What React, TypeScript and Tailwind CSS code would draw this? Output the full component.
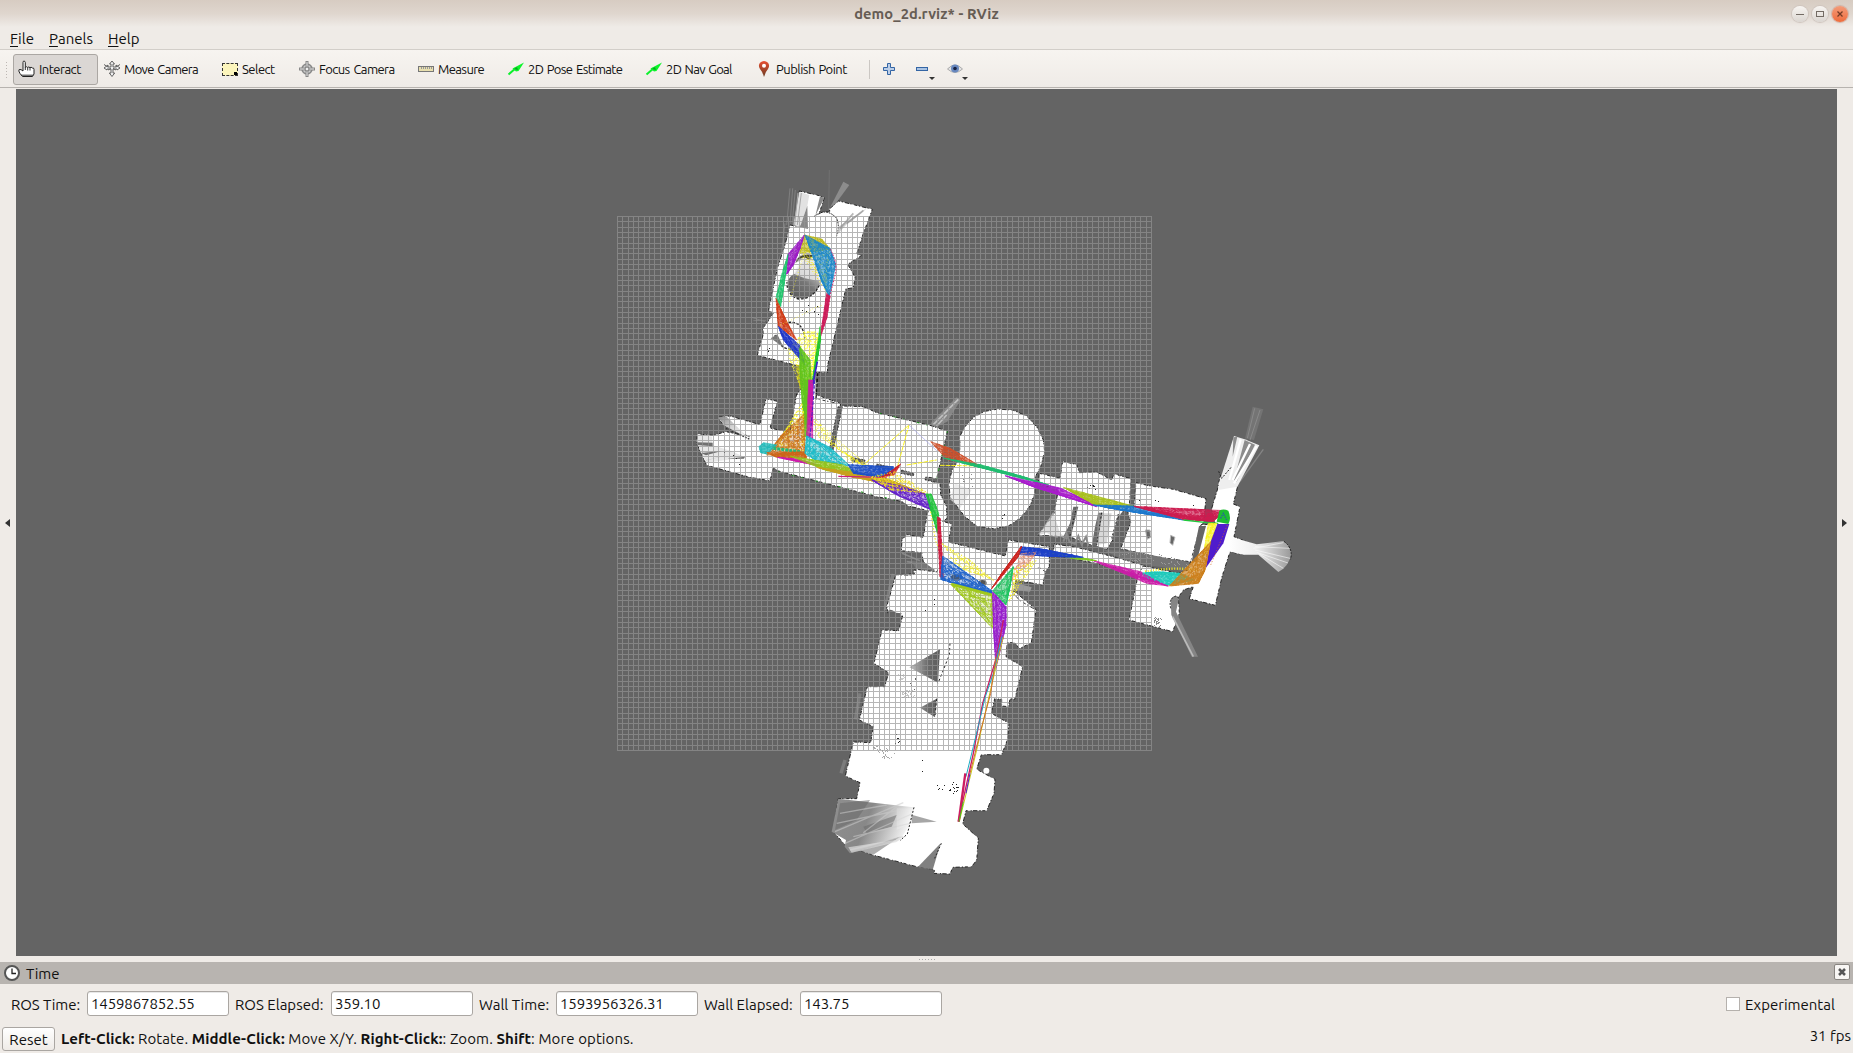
import React from "react";

type Pt = [number, number];

function parse(s: string): Pt[] {
  return s.trim().split(/\s+/).map((p) => p.split(",").map(Number) as Pt);
}

function rng(seed: number) {
  let s = seed * 7919 + 17;
  return () => {
    s = (s * 16807) % 2147483647;
    return s / 2147483647;
  };
}

// Free space: white area with a broken black wall line round it.
function Room({ p }: { p: string }) {
  return (
    <g>
      <polygon points={p} fill="#fff" />
      <polygon points={p} fill="none" stroke="#111" strokeWidth="2.6" strokeDasharray="9 5 4 6 13 4 3 9" />
    </g>
  );
}

// A bundle of constraint lines: random chords across a polygon.
function Fan({ p, c, n = 60, base = 0.5, dots = false }: { p: string; c: string; n?: number; base?: number; dots?: boolean }) {
  const pts = parse(p);
  const r = rng(pts[0][0] + pts[0][1] * 3 + n);
  const edge = () => {
    const i = Math.floor(r() * pts.length);
    const t = r();
    const a = pts[i];
    const b = pts[(i + 1) % pts.length];
    return [i, a[0] + (b[0] - a[0]) * t, a[1] + (b[1] - a[1]) * t];
  };
  let d = "";
  const count = dots ? n : n * 0.6;
  for (let k = 0; k < count; k++) {
    const a = edge();
    const b = edge();
    if (a[0] === b[0]) continue;
    d += `M${a[1].toFixed(1)} ${a[2].toFixed(1)}L${b[1].toFixed(1)} ${b[2].toFixed(1)}`;
  }
  return (
    <g>
      <polygon points={p} fill={c} fillOpacity={base} />
      <path d={d} stroke={c} strokeOpacity=".95" strokeWidth={dots ? "3" : "2.8"} strokeDasharray={dots ? "3 8 5 13 3 6" : "7 5 3 8 11 6"} fill="none" />
      {!dots && <polygon points={p} fill="none" stroke={c} strokeWidth="2.4" strokeOpacity=".8" />}
    </g>
  );
}

function Specks({ p, c = "#222", n }: { p: string; c?: string; n: number }) {
  const pts = parse(p);
  const xs = pts.map((q) => q[0]);
  const ys = pts.map((q) => q[1]);
  const x0 = Math.min(...xs), x1 = Math.max(...xs), y0 = Math.min(...ys), y1 = Math.max(...ys);
  const r = rng(x0 + y0 + n);
  const inside = (x: number, y: number) => {
    let v = false;
    for (let i = 0, j = pts.length - 1; i < pts.length; j = i++) {
      const [xi, yi] = pts[i];
      const [xj, yj] = pts[j];
      if (yi > y !== yj > y && x < ((xj - xi) * (y - yi)) / (yj - yi) + xi) v = !v;
    }
    return v;
  };
  let d = "";
  for (let k = 0; k < n; k++) {
    const x = Math.round((x0 + r() * (x1 - x0)) / 3) * 3;
    const y = Math.round((y0 + r() * (y1 - y0)) / 3) * 3;
    if (inside(x, y)) d += `M${x} ${y}h3v3h-3z`;
  }
  return <path d={d} fill={c} shapeRendering="crispEdges" />;
}

function Grid() {
  let d = "";
  for (let i = 0; i <= 100; i++) {
    const o = Math.round(i * 5.34);
    d += `M${617 + o} 216h1v535h-1zM617 ${216 + o}h535v1h-535z`;
  }
  return <path d={d} fill="#949494" fillOpacity=".68" />;
}

function MapView() {
  return (
    <svg className="block h-full w-full" viewBox="16 89 1821 867" preserveAspectRatio="none">
      <defs>
        <linearGradient id="ray" x1="0" y1="0" x2="1" y2="1">
          <stop offset="0" stopColor="#858585" />
          <stop offset=".45" stopColor="#d5d5d5" />
          <stop offset="1" stopColor="#fff" />
        </linearGradient>
        <linearGradient id="shade" x1="0" y1="1" x2=".6" y2="0">
          <stop offset="0" stopColor="#555" />
          <stop offset=".5" stopColor="#777" />
          <stop offset="1" stopColor="#eee" />
        </linearGradient>
        <linearGradient id="tri" x1="0" y1="0" x2="1" y2="0">
          <stop offset="0" stopColor="#c4c4c4" />
          <stop offset=".6" stopColor="#6b6b6b" />
          <stop offset="1" stopColor="#5c5c5c" />
        </linearGradient>
        <linearGradient id="fan" x1="0" y1="0" x2="1" y2=".25">
          <stop offset="0" stopColor="#8f8f8f" />
          <stop offset=".5" stopColor="#888" />
          <stop offset="1" stopColor="#f4f4f4" />
        </linearGradient>
        <linearGradient id="right" x1="0" y1="0" x2="1" y2="0">
          <stop offset="0" stopColor="#fff" />
          <stop offset=".45" stopColor="#eee" />
          <stop offset="1" stopColor="#999" />
        </linearGradient>
      </defs>

      {/* North wing */}
      <g transform="translate(690 165) scale(.333333)">
        <path d="M418 15L416 135" stroke="#777" strokeWidth="2" />
        <path d="M418 132L460 50L478 60L434 120Z" fill="#8c8c8c" />
        <path d="M300 70L290 180M308 70L300 180M316 75L306 180" stroke="#808080" strokeWidth="3" />
        <path d="M285 175L275 260L262 300L245 380M245 310L255 360M185 457L225 470M190 467L228 466" stroke="#808080" strokeWidth="3" fill="none" />
        <Room p="328,78 388,92 403,98 386,150 400,140 420,142 418,132 446,108 547,133 520,205 500,267 514,272 473,298 495,336 490,368 467,372 450,445 412,604 413,622 372,622 380,690 448,714 447,760 310,780 320,690 340,660 330,604 202,571 222,500 217,494 250,445 236,436 262,310 285,240 300,180 330,186" />
        <path d="M328 80L310 180L330 186L352 122L358 90Z" fill="#e2e2e2" />
        <path d="M352 122L330 186L354 192ZM390 94L403 98L376 152Z" fill="#888" />
        <path d="M324 84L314 180M334 84L322 180" stroke="#a8a8a8" strokeWidth="3" />
        <circle cx="409" cy="180" r="39" fill="#fff" />
        <path d="M372 155Q408 125 440 160Q450 185 440 212" stroke="#111" strokeWidth="3" strokeDasharray="5 3" fill="none" />
        <path d="M445 185L530 130L515 145L470 178L441 210Z" fill="#bbb" opacity=".7" />
        <path d="M490 145L450 190M520 136L470 176" stroke="#888" strokeWidth="5" opacity=".6" />
        <path d="M316 294Q325 265 350 262L372 272L390 356Q375 400 327 400Q296 395 292 352Q298 332 314 326L345 280Z" fill="url(#shade)" />
        <path d="M310 326L340 275L378 292L396 350L345 340Z" fill="#ededed" opacity=".8" />
        <path d="M316 294Q325 262 370 270L358 284Q335 268 316 294Z" fill="#4a4a30" />
        <path d="M388 360Q370 402 327 402Q293 395 290 352" stroke="#222" strokeWidth="4" strokeDasharray="8 5" fill="none" />
        <path d="M295 472Q340 468 344 520M255 510Q270 555 310 553" stroke="#222" strokeWidth="4" strokeDasharray="8 4" fill="none" />
        <path d="M242 520L262 508L280 546Z" fill="#777" />
        <Specks p="320,420 390,420 390,450 320,450" n={10} />
        <Specks p="220,545 245,545 245,560 220,560" n={5} />
        <path d="M383 625L378 700M372 622L366 700" stroke="#111" strokeWidth="4" strokeDasharray="10 6" />
      </g>

      {/* West wing and central corridor */}
      <g transform="translate(690 380) scale(.333333)">
        <path d="M722 130L800 52L812 60L772 125L735 142Z" fill="#868686" />
        <path d="M730 134L805 58M740 138L770 105" stroke="#c0c0c0" strokeWidth="5" />
        <path d="M636 520L690 542M650 545L700 552" stroke="#888" strokeWidth="5" />
        <path d="M608 585L585 690" stroke="#888" strokeWidth="8" />
        <Room p="228,56 262,64 240,144 300,158 320,42 340,46 345,0 380,0 376,56 452,72 420,205 430,208 456,78 520,80 560,98 720,136 772,154 758,215 740,296 705,290 706,300 750,310 752,344 770,380 770,416 758,424 785,432 775,486 946,528 955,480 1078,500 1078,560 1066,574 1058,615 975,600 968,630 1038,688 1027,750 630,750 638,706 594,700 590,680 618,584 670,582 672,570 735,576 700,545 695,518 634,512 636,480 650,464 700,472 712,400 716,392 655,378 635,364 560,350 262,272 250,262 240,302 180,292 50,256 20,190 22,162 70,166 108,155 178,170 100,135 84,112 120,108 210,134" />
        <path d="M22 162L66 170L68 196L126 214L165 232L52 248Q24 220 22 162Z" fill="#e8e8e8" />
        <path d="M20 187L68 188L68 199L21 195ZM32 219L95 213L48 226ZM42 242L126 222L50 241ZM110 237L165 230L162 236Z" fill="#707070" />
        <path d="M84 112L110 110L180 178L104 137Z" fill="url(#ray)" />
        <path d="M108 145L180 178" stroke="#333" strokeWidth="4" strokeDasharray="5 4" />
        <path d="M484 232L525 240L524 251L486 244ZM560 252L608 262L604 267L560 260ZM635 270L672 280L670 288L632 280ZM444 80L457 82L430 208L418 208Z" fill="#656565" stroke="#111" strokeWidth="2" strokeDasharray="6 4" />
        <path d="M265 276L640 366M570 100L720 137M772 154L740 296" stroke="#1a991a" strokeWidth="3" strokeDasharray="5 37 9 20" fill="none" />
        <path d="M664 543L700 546L735 570L726 582L680 570Z" fill="#777" />
        <Room p="810,190 808,172 825,140 850,112 885,94 925,87 970,91 1010,108 1040,140 1060,180 1064,215 1052,260 1036,290 1034,340 1020,378 990,415 955,438 910,446 860,438 825,410 800,378 780,350 777,310 786,270 800,250 808,232" />
        <path d="M780 358L795 310L845 330L810 385Z" fill="#e4e4e4" opacity=".7" />
        <Specks p="810,280 855,280 855,340 810,340" c="#888" n={9} />
        <Specks p="935,400 950,400 950,416 935,416" n={6} />
        <Specks p="100,170 150,150 150,260 100,260" n={4} />
        <path d="M1078 425L1042 465L1060 460L1078 440Z" fill="#bbb" />
        <path d="M965 605L1025 622L1020 635L968 630Z" fill="#999" />
      </g>

      {/* East wing */}
      <g transform="translate(930 390) scale(.333333)">
        <path d="M968 50L1000 58L972 150L945 145Z" fill="#747474" />
        <path d="M974 55L952 145M990 60L960 150" stroke="#8a8a8a" strokeWidth="3" />
        <path d="M1000 178L930 275" stroke="#858585" strokeWidth="4" />
        <Room p="328,250 390,265 398,214 440,224 448,248 500,246 545,270 552,252 603,266 598,348 612,352 618,278 660,288 730,298 828,326 820,400 812,406 785,516 680,500 572,476 602,398 590,352 565,380 555,440 530,478 490,468 470,460 418,440 325,436 372,370 385,300 325,280" />
        <path d="M325 436L370 365L390 430L418 448L375 442L350 428Z" fill="#ccc" opacity=".7" />
        <path d="M445 350L420 450L400 440L420 400L430 350ZM518 368L500 470L485 470L495 410L505 368ZM565 372L545 450L560 446Z" fill="#6a6a6a" />
        <path d="M503 370L545 370L530 460L500 465Z" fill="#aaa" opacity=".45" />
        <path d="M440 350L418 445M515 368L500 465M565 372L545 445" stroke="#222" strokeWidth="3" strokeDasharray="6 6" />
        <path d="M384 438L420 450L500 468L530 478L526 490L380 462Z" fill="#646464" />
        <path d="M400 455L410 430L418 455L435 462L445 438L455 464L468 440L475 468" fill="none" stroke="#888" strokeWidth="6" />
        <Specks p="470,282 500,285 500,298 470,295" n={12} />
        <path d="M646 420L660 420L662 442L652 448ZM722 436L735 442L728 466L720 458Z" fill="#666" stroke="#bbb" strokeWidth="3" />
        <Specks p="620,310 820,340 810,350 625,330" n={16} />
        <Room p="372,462 440,472 560,503 640,526 640,562 560,534 500,520 370,494" />
        <path d="M520 480L600 482L720 506L790 518L784 548L700 532L640 524L570 505Z" fill="#747474" />
        <Room p="625,552 640,528 745,550 775,540 812,406 855,400 845,356 862,300 870,260 910,280 922,292 910,342 930,350 912,440 985,470 940,494 900,485 876,560 856,646 778,626 790,590 760,600 745,622 748,670 728,725 597,690" />
        <path d="M838 410L858 410L832 520L808 535Z" fill="#fff" />
        <path d="M807 408L828 408L800 515L785 515Z" fill="#656565" />
        <path d="M870 270L912 138L944 148L988 166L922 290L865 300Z" fill="#eee" />
        <path d="M944 150L975 164L920 275L912 270ZM910 142L922 140L908 200Z" fill="#8c8c8c" />
        <path d="M932 148L898 270M980 168L912 280M960 162L908 270" stroke="#fff" strokeWidth="7" />
        <path d="M866 244L875 265L905 230" stroke="#222" strokeWidth="3" fill="none" strokeDasharray="6 4" />
        <path d="M900 440L980 463L1060 453Q1082 468 1084 492Q1075 532 1045 546L985 494L940 494L896 484Z" fill="url(#right)" />
        <path d="M975 470L1078 475M975 480L1080 505M985 490L1060 535M970 475L1060 458M980 487L1074 519" stroke="#fff" strokeWidth="3" opacity=".55" />
        <path d="M1062 454Q1090 475 1082 508" stroke="#222" strokeWidth="3" fill="none" strokeDasharray="6 4" />
        <path d="M722 628Q735 610 747 625L738 665L804 800L785 800L724 675Z" fill="#858585" />
        <path d="M728 680L790 800" stroke="#bbb" strokeWidth="5" />
        <path d="M722 655Q715 625 738 618L747 625" stroke="#222" strokeWidth="3" fill="none" strokeDasharray="6 4" />
        <Specks p="670,680 695,680 695,712 670,712" c="#888" n={30} />
        <Specks p="540,485 690,490 780,518 770,535 600,510" c="#999" n={110} />
      </g>

      {/* South hall */}
      <g transform="translate(820 560) scale(.333333)">
        <path d="M220 42L199 130M120 400L106 478M75 600L63 640" stroke="#7c7c7c" strokeWidth="10" />
        <Room p="228,44 280,46 290,28 350,36 370,0 660,24 677,36 668,75 588,60 580,100 600,122 648,150 634,248 598,266 585,248 562,248 558,290 608,320 584,418 570,416 566,440 545,438 545,418 524,416 514,460 567,490 562,540 545,584 484,584 470,628 525,658 522,700 500,752 438,752 428,792 475,834 470,900 455,920 398,922 390,942 342,940 344,930 290,920 155,884 80,860 40,815 55,716 110,716 120,668 76,648 100,546 152,548 160,500 118,480 142,380 194,380 206,338 162,310 186,210 236,212 248,168 206,160 200,140" />
        <polygon points="354,-6 585,-6 655,8 652,38 585,50 354,50" fill="#fff" />
        <ellipse cx="410" cy="52" rx="18" ry="10" fill="#555" />
        <ellipse cx="487" cy="69" rx="13" ry="9" fill="#555" />
        <path d="M55 716L280 742L272 790L240 840L90 880L74 860L78 840L35 815Z" fill="url(#fan)" />
        <path d="M60 730L150 720L110 780L45 810ZM130 800L230 765L215 800L140 820ZM160 884L240 830L210 840L95 876Z" fill="#6a6a6a" opacity=".55" />
        <path d="M45 815L250 728M75 850L275 762M60 760L200 735M90 870L250 830M130 818L230 740M100 830L270 790M50 790L240 750" stroke="#ccc" strokeWidth="4" opacity=".55" />
        <path d="M85 862L240 838L230 846L95 878Z" fill="#ddd" opacity=".7" />
        <path d="M230 745L280 745L270 790L230 810Z" fill="#fff" opacity=".2" />
        <path d="M275 764L350 785L275 790Z" fill="#888" opacity=".75" />
        <path d="M362 850L290 925L338 930Z" fill="#6a6a6a" opacity=".85" />
        <path d="M282 742L262 822L240 842M364 850L344 895" stroke="#222" strokeWidth="3" strokeDasharray="6 5" fill="none" />
        <path d="M360 268L354 368L268 322ZM350 416L345 472L300 443Z" fill="url(#tri)" />
        <path d="M390 250L388 285L366 340L354 370M350 416L345 470" stroke="#222" strokeWidth="3" strokeDasharray="7 7" fill="none" />
        <Specks p="245,390 285,390 285,412 245,412" c="#c4c4c4" n={50} />
        <Specks p="232,340 255,340 255,358 232,358" c="#ccc" n={20} />
        <Specks p="350,675 375,675 375,690 350,690" n={6} />
        <Specks p="385,660 415,660 415,700 385,700" n={16} />
        <Specks p="150,550 225,570 220,590 190,600" c="#aaa" n={70} />
        <Specks p="225,520 240,520 235,560 225,560" n={7} />
        <Specks p="270,340 290,340 290,400 270,400" c="#666" n={5} />
        <Specks p="280,580 330,580 310,640 290,630" n={4} />
        <Specks p="315,115 345,115 345,165 315,165" n={4} />
        <circle cx="499" cy="632" r="9" fill="#fff" />
        <path d="M204 160Q206 140 228 158L245 160L238 175L210 170Z" fill="#646464" />
      </g>

      <Grid />

      {/* Pose graph, north loop */}
      <g transform="translate(690 165) scale(.333333)">
        <Fan p="290,560 340,500 385,500 380,590 360,650 340,690" c="#ffff28" n={75} base={0.08} dots />
        <Fan p="318,600 335,600 345,690 330,670" c="#c8c41c" n={40} base={0} dots />
        <Fan p="318,250 420,245 400,340 412,385 350,270" c="#f4ee22" n={36} base={0} dots />
        <Fan p="343,210 395,222 420,252 380,258 330,264" c="#bab81c" n={80} base={0.6} />
        <Fan p="343,210 330,250 310,300 290,328 294,268" c="#9b1bc4" n={60} base={0.7} />
        <Fan p="294,268 286,330 272,425 258,400 275,330" c="#20c46c" n={50} base={0.6} />
        <Fan p="258,400 275,440 320,525 265,484" c="#d03c18" n={70} base={0.65} />
        <Fan p="265,484 328,540 345,600 280,525" c="#1e34c8" n={50} base={0.7} />
        <Fan p="345,210 420,250 437,300 418,395 395,350 375,280" c="#1c88c8" n={120} base={0.6} />
        <path d="M420 252Q446 295 434 335L418 398" stroke="#d4206a" strokeWidth="3" strokeDasharray="5 4" fill="none" />
        <Fan p="410,385 420,395 410,460 390,520" c="#cc1a58" n={40} base={0.8} />
        <Fan p="390,485 392,525 372,640 366,655" c="#20c42c" n={40} base={0.8} />
        <path d="M382 590L370 650L364 700" stroke="#3a20cc" strokeWidth="5" fill="none" />
        <Fan p="330,545 360,585 364,650 352,780 342,780 330,620" c="#60c41c" n={90} base={0.7} />
        <Fan p="358,650 367,660 368,780 351,780" c="#cc1aa8" n={30} base={0.7} />
        <path d="M270 480Q340 450 370 430L400 420M298 410L350 240" stroke="#f8f020" strokeWidth="2" strokeDasharray="3 6" fill="none" />
      </g>

      {/* Pose graph, west and centre */}
      <g transform="translate(690 380) scale(.333333)">
        <Fan p="335,70 280,160 260,200 340,225 345,110" c="#f5ef20" n={40} base={0} dots />
        <Fan p="370,110 480,245 540,260 380,170" c="#f5ef20" n={34} base={0} dots />
        <path d="M528 248L657 135L622 262M650 255L740 240M750 256L880 258" stroke="#f8f020" strokeWidth="3" fill="none" strokeDasharray="14 3" />
        <path d="M657 135L740 212" stroke="#a8a8ee" strokeWidth="2" />
        <Fan p="345,100 345,225 230,225 275,165" c="#cc741c" n={130} base={0.3} />
        <Fan p="342,0 354,0 354,170 345,170" c="#60c41c" n={30} base={0.75} />
        <Fan p="356,0 368,0 368,178 350,170" c="#c81aa8" n={40} base={0.6} />
        <path d="M374 0L370 60L360 170" stroke="#4a20c8" strokeWidth="3" fill="none" strokeDasharray="12 4" />
        <Fan p="207,200 220,188 260,195 232,222 212,218" c="#20baba" n={30} base={0.8} />
        <path d="M250 205L330 215" stroke="#24b878" strokeWidth="9" strokeDasharray="9 3" />
        <Fan p="230,218 345,216 350,235 260,232" c="#cc6418" n={50} base={0.7} />
        <Fan p="262,232 330,238 390,258 330,246" c="#cc1aa8" n={35} base={0.7} />
        <Fan p="350,168 420,202 480,258 375,240 345,220" c="#1cbcc8" n={130} base={0.45} />
        <Fan p="300,228 460,255 520,288 410,272" c="#92c41c" n={80} base={0.6} />
        <Fan p="380,262 570,288 712,345 600,310 490,292" c="#c8a01c" n={80} base={0.7} />
        <path d="M445 289L590 292" stroke="#cc207a" strokeWidth="4" />
        <Fan p="474,254 610,260 610,282 560,290 490,280" c="#1c50c8" n={100} base={0.65} />
        <Fan p="632,252 612,285 570,292 605,280 618,262" c="#cc1c24" n={35} base={0.8} />
        <Fan p="545,300 640,320 715,345 724,390 620,345" c="#6420c8" n={120} base={0.35} />
        <Fan p="540,290 615,275 715,340 600,330" c="#f0e020" n={40} base={0} dots />
        <Fan p="708,342 724,342 746,400 742,460 726,400" c="#20c43c" n={60} base={0.7} />
        <path d="M722 395L736 480L752 520" stroke="#f5ef20" strokeWidth="3" strokeDasharray="5 5" fill="none" />
        <Fan p="742,410 750,415 760,598 750,590" c="#cc1c40" n={40} base={0.7} />
        <Fan p="755,490 840,540 915,605 800,560" c="#f5ef20" n={30} base={0} dots />
        <Fan p="758,528 905,632 905,645 800,612 752,598" c="#2064cc" n={160} base={0.35} />
        <Fan p="782,612 908,646 908,745" c="#a0c81c" n={115} base={0.25} />
        <path d="M784 612L908 645" stroke="#a0c81c" strokeWidth="7" />
        <Fan p="722,185 780,205 870,258 770,238" c="#d0502a" n={70} base={0.5} />
        <Fan p="760,234 870,254 1000,290 1078,316 870,262" c="#20bb70" n={60} base={0.6} />
      </g>

      {/* Pose graph, east loop */}
      <g transform="translate(930 390) scale(.333333)">
        <Fan p="225,257 390,294 475,335 500,350 320,294" c="#a81ccc" n={100} base={0.7} />
        <Fan p="400,292 610,348 540,355 490,342" c="#a8c01c" n={110} base={0.65} />
        <Fan p="490,345 610,348 760,390 560,358" c="#1c78cc" n={80} base={0.65} />
        <Fan p="612,349 885,362 850,394 760,388" c="#cc1c50" n={160} base={0.65} />
        <path d="M760 390L830 398L865 400" stroke="#20c83c" strokeWidth="4" fill="none" />
        <path d="M860 395L868 362Q880 355 895 362Q905 385 895 402Z" fill="#1dbd31" />
        <path d="M872 385L880 370L890 390" stroke="#2b58a8" strokeWidth="4" fill="none" strokeDasharray="4 3" />
        <Fan p="835,400 860,400 840,470 820,500" c="#f8f422" n={45} base={0.6} />
        <path d="M862 402L898 402L880 460L827 535L842 455Z" fill="#501ccc" />
        <path d="M892 405L840 530" stroke="#d46a20" strokeWidth="2" strokeDasharray="4 5" />
        <path d="M645 545Q730 530 800 540" stroke="#f3ec20" strokeWidth="7" strokeDasharray="3 5" fill="none" />
        <Fan p="632,550 680,545 750,550 795,570 715,586 660,570" c="#1cc8ba" n={110} base={0.7} />
        <Fan p="842,455 825,540 805,580 718,588" c="#cc801c" n={170} base={0.65} />
        <Fan p="490,512 632,545 640,565 715,588 650,580" c="#cc1ca8" n={90} base={0.6} />
        <Fan p="300,475 500,512 440,508" c="#80c81c" n={35} base={0.6} />
        <Fan p="272,470 340,478 460,502 390,500 268,494" c="#1c40c8" n={100} base={0.65} />
        <Fan p="275,468 265,500 185,596 215,550" c="#cc2420" n={70} base={0.6} />
        <Fan p="272,490 320,485 290,530 255,530 245,575" c="#e89070" n={35} base={0.15} dots />
        <Fan p="250,535 265,550 235,640 320,510" c="#f5ef20" n={26} base={0} dots />
        <Fan p="250,530 238,600 228,645 188,603" c="#20c460" n={100} base={0.5} />
        <Fan p="188,605 228,650 228,705 198,835 190,700" c="#961ccc" n={140} base={0.55} />
      </g>

      {/* Pose graph, path into the south hall */}
      <g transform="translate(820 560) scale(.333333)" fill="none" strokeWidth="3">
        <path d="M550 180L530 290L488 430L460 580L415 785" stroke="#cc1c60" strokeWidth="4" />
        <path d="M545 230L520 340L496 410L460 560L438 650" stroke="#1cacc4" />
        <path d="M550 230L528 320L500 440L470 570L418 785" stroke="#c8cc1c" />
        <path d="M528 290L512 400L480 520L450 640" stroke="#d06a28" />
        <path d="M450 640L438 700" stroke="#501ccc" />
        <path d="M436 640L416 785" stroke="#cc1c60" strokeWidth="7" />
        <path d="M430 725L417 785" stroke="#40c41c" />
      </g>
    </svg>
  );
}

function Tool({ w, icon, label, lw, active }: { w: string; icon: React.ReactNode; label: string; lw: string; active?: boolean }) {
  return (
    <div className={`flex h-[31px] shrink-0 items-center gap-[3px] rounded-[3px] border pl-[4px] ${w} ${active ? "border-[#aba7a3] bg-[#dbd7d4]" : "border-transparent"}`}>
      <span className="flex size-[18px] shrink-0 items-center justify-center">{icon}</span>
      <span className={`whitespace-nowrap pt-px text-[13px] ${lw}`}>{label}</span>
    </div>
  );
}

const Hand = () => (
  <svg width="18" height="18" viewBox="0 0 18 18">
    <path d="M5 9V2.5Q5 1 6 1T7.3 2.5V7.5Q8.5 6 9.7 7.5Q10.8 6.3 12 7.7Q13 6.5 14.3 8Q16 7.5 16 9.5V14L14.5 16.5H4.5L2 13.5Q0 10.5 1.2 9.5Q3 9 5 11Z" fill="#fff" stroke="#222" strokeWidth="1" />
    <path d="M7.3 7V10M9.7 7.5V10.5M12 7.5V10.5M3 15.2H15" stroke="#333" fill="none" />
  </svg>
);
const Move = () => (
  <svg width="18" height="18" viewBox="0 0 18 18" fill="#eee" stroke="#555" strokeWidth=".9">
    <path d="M9 1L11.5 4H10V7H13V5L17 8L14 10V9H10V13H11.7L9 16.5L6.3 13H8V9H4V10L1 8L5 5V7H8V4H6.5Z" />
    <path d="M1 4.5L5 7M17 4.5L13 7M5 10L8 8.5M13 10L10 8.5" fill="none" />
  </svg>
);
const Focus = () => (
  <svg width="18" height="18" viewBox="0 0 18 18" fill="none" stroke="#888">
    <circle cx="9" cy="9" r="5" fill="#ccc" strokeWidth="1.5" />
    <path d="M9 1V17M1 9H17" strokeWidth="3" />
    <path d="M9 2V16M2 9H16" stroke="#e5e5e5" strokeWidth="1" />
    <circle cx="9" cy="9" r="2" fill="#eee" stroke="#777" />
  </svg>
);
const Arrow = () => (
  <svg width="18" height="18" viewBox="0 0 18 18">
    <path d="M1.5 14.5L9 8" stroke="#0df02d" strokeWidth="2" />
    <path d="M5.5 8.5L17 2.5L11.5 11L9 11.5Z" fill="#0cf42a" />
    <path d="M7 9L10 7L11 10Z" fill="#09a424" />
  </svg>
);

function Field({ label, value, lw }: { label: string; value: string; lw: string }) {
  return (
    <>
      <span className={`shrink-0 whitespace-nowrap pt-px text-[15px] ${lw}`}>{label}</span>
      <div className="mr-[6px] flex h-[25px] w-[142px] shrink-0 items-center rounded-[3px] border border-[#aaa6a2] bg-white pb-px pl-[3px] shadow-[inset_0_1px_0_#e8e8e8]">
        <span className="text-[15px] tracking-[-0.12px]">{value}</span>
      </div>
    </>
  );
}

function Caret() {
  return <span className="absolute right-[-5px] bottom-[-3px] h-0 w-0 border-x-[3px] border-t-[3px] border-x-transparent border-t-[#333]" />;
}

export default function App() {
  return (
    <div className="flex h-[1053px] w-[1853px] flex-col overflow-hidden bg-[#efebe7] font-['Ubuntu','Noto_Sans',sans-serif] leading-none text-[#111]">
      <header className="relative flex h-[27px] shrink-0 items-center justify-center bg-linear-to-b from-[#d7ccc2] via-[#dfd6ce] to-[#efebe7]">
        <h1 className="pt-[2px] text-[14.67px] font-bold tracking-[0.1px] text-[#665c54]">demo_2d.rviz* - RViz</h1>
        <div className="absolute top-[6px] right-[5px] flex gap-[4px]">
          <span className="flex size-4 items-center justify-center rounded-full bg-linear-to-b from-[#f8f5f2] to-[#dbd6d1] shadow-[0_0_1px_1px_#cdc3bc]">
            <i className="h-px w-2 bg-[#736b64]" />
          </span>
          <span className="flex size-4 items-center justify-center rounded-full bg-linear-to-b from-[#f8f5f2] to-[#dbd6d1] shadow-[0_0_1px_1px_#cdc3bc]">
            <i className="h-[6px] w-2 border border-[#736b64]" />
          </span>
          <span className="flex size-4 items-center justify-center rounded-full bg-linear-to-b from-[#f39b78] to-[#ee6b3b] shadow-[0_0_1px_1px_#cfb1a4]">
            <svg width="8" height="8" viewBox="0 0 8 8"><path d="M1.5 1.5L6.5 6.5M6.5 1.5L1.5 6.5" stroke="#743b26" strokeWidth="1.3" /></svg>
          </span>
        </div>
      </header>

      <nav className="flex h-[23px] shrink-0 items-center gap-[15px] border-b border-[#d2cec9] pl-[10px] text-[15px]">
        <span className="w-[24px] tracking-[0.1px]"><u className="underline-offset-2">F</u>ile</span>
        <span className="w-[44px] tracking-[0.05px]"><u className="underline-offset-2">P</u>anels</span>
        <span className="w-[31px]"><u className="underline-offset-2">H</u>elp</span>
      </nav>

      <div className="mb-px flex h-[38px] shrink-0 items-center border-b border-[#b7b3af] bg-linear-to-b from-[#f7f4f0] to-[#efebe7] pt-px pl-[5px]">
        <span className="mr-[4px] h-[17px] w-1 shrink-0 bg-[radial-gradient(#bdb8b4_0.8px,transparent_0.9px)] bg-[length:3px_3px]" />
        <Tool w="w-[85px]" icon={<Hand />} label="Interact" lw="tracking-[-0.5px]" active />
        <Tool w="w-[118px]" icon={<Move />} label="Move Camera" lw="tracking-[-0.65px] [word-spacing:1.2px]" />
        <Tool w="w-[77px]" icon={<span className="relative h-[13px] w-4 border border-dashed border-[#333] bg-[#fcf5bc]"><i className="absolute right-0 bottom-0 size-[3px] bg-black" /></span>} label="Select" lw="tracking-[-0.5px]" />
        <Tool w="w-[119px]" icon={<Focus />} label="Focus Camera" lw="tracking-[-0.6px] [word-spacing:1.5px]" />
        <Tool w="w-[90px]" icon={<svg width="18" height="18" viewBox="0 0 18 18"><rect x="1.5" y="6.5" width="15" height="5" fill="#e8dfae" stroke="#777" /><path d="M4.5 7V9M6.5 7V9M8.5 7V9M10.5 7V9M12.5 7V9M14.5 7V9" stroke="#999" /></svg>} label="Measure" lw="tracking-[-0.6px]" />
        <Tool w="w-[138px]" icon={<Arrow />} label="2D Pose Estimate" lw="tracking-[-0.62px] [word-spacing:1.2px]" />
        <Tool w="w-[110px]" icon={<Arrow />} label="2D Nav Goal" lw="tracking-[-0.7px] [word-spacing:1.2px]" />
        <Tool w="w-[117px]" icon={<svg width="18" height="18" viewBox="0 0 18 18"><defs><linearGradient id="pin" x1="0" y1="0" x2="0" y2="1"><stop stopColor="#e84f32" /><stop offset="1" stopColor="#6a3c22" /></linearGradient></defs><path d="M9 17Q7.5 11.5 5 9Q2.8 5.5 5 2.8Q9-.8 13 2.8Q15.2 5.5 13 9Q10.5 11.5 9 17Z" fill="url(#pin)" /><circle cx="9" cy="5.8" r="2" fill="#fff" /></svg>} label="Publish Point" lw="tracking-[-0.5px] [word-spacing:1px]" />
        <span className="ml-[2px] h-[19px] w-px shrink-0 bg-[#cbc7c3]" />
        <span className="ml-[11px] flex size-4 items-center justify-center">
          <svg width="14" height="14" viewBox="0 0 14 14"><path d="M5.5 1.5H8.5V5.5H12.5V8.5H8.5V12.5H5.5V8.5H1.5V5.5H5.5Z" fill="#bbcee8" stroke="#3465a4" /></svg>
        </span>
        <span className="relative ml-[17px] flex size-4 items-center justify-center">
          <i className="h-[4px] w-3 border border-[#3465a4] bg-[#a9c3e3]" />
          <Caret />
        </span>
        <span className="relative ml-[17px] flex size-4 items-center justify-center">
          <svg width="16" height="14" viewBox="0 0 16 14"><path d="M.5 7Q8-1 15.5 7Q8 14 .5 7Z" fill="#e4e4e4" stroke="#aaa" /><circle cx="8" cy="6.5" r="4" fill="#6888bf" /><circle cx="8" cy="6.5" r="1.8" fill="#172243" /></svg>
          <Caret />
        </span>
      </div>

      <main className="flex h-[867px] shrink-0">
        <div className="flex w-4 items-center justify-center pr-[2px]"><span className="h-0 w-0 border-y-4 border-r-[5px] border-y-transparent border-r-[#333]" /></div>
        <div className="min-w-0 flex-1 bg-[#646464]"><MapView /></div>
        <div className="flex w-4 items-center justify-center pr-[2px]"><span className="h-0 w-0 border-y-4 border-l-[5px] border-y-transparent border-l-[#333]" /></div>
      </main>

      <div className="flex h-[6px] shrink-0 items-center justify-center gap-[2px]">
        {[0, 1, 2, 3, 4, 5].map((i) => <i key={i} className="size-px bg-[#aaa]" />)}
      </div>

      <div className="flex h-[22px] shrink-0 items-center bg-[#b8b4b0] pr-[3px] pl-[4px]">
        <svg width="16" height="16" viewBox="0 0 16 16"><circle cx="8" cy="8" r="7" fill="#fff" stroke="#555" strokeWidth="2" /><path d="M8 3.5V8.5H12" stroke="#222" fill="none" strokeWidth="1.3" /></svg>
        <span className="ml-[6px] pt-px text-[15px]">Time</span>
        <span className="ml-auto flex size-[16px] -translate-y-[1px] items-center justify-center rounded-[2px] border border-[#888480] bg-[#f8f6f4]">
          <svg width="8" height="8" viewBox="0 0 8 8"><path d="M1 1L7 7M7 1L1 7" stroke="#555" strokeWidth="2.5" /></svg>
        </span>
      </div>

      <div className="flex h-[39px] shrink-0 items-center pl-[11px]">
        <Field label="ROS Time:" value="1459867852.55" lw="w-[76px] tracking-[-0.05px]" />
        <Field label="ROS Elapsed:" value="359.10" lw="w-[96px]" />
        <Field label="Wall Time:" value="1593956326.31" lw="w-[77px] tracking-[0.05px]" />
        <Field label="Wall Elapsed:" value="143.75" lw="w-[96px]" />
        <span className="ml-auto size-[14px] border border-[#b5b1ad] bg-white" />
        <span className="ml-[5px] w-[92px] pt-px text-[15px]">Experimental</span>
        <span className="w-[16px]" />
      </div>

      <footer className="flex h-[30px] shrink-0 items-center pt-[2px] pl-[2px] text-[15px]">
        <button className="flex h-[24px] w-[53px] shrink-0 items-center justify-center rounded-[3px] border border-[#aaa6a2] bg-linear-to-b from-white to-[#efebe7]">Reset</button>
        <p className="ml-[6px] -translate-y-px whitespace-nowrap tracking-[0.1px]"><b>Left-Click:</b> Rotate. <b>Middle-Click:</b> Move X/Y. <b>Right-Click:</b>: Zoom. <b>Shift</b>: More options.</p>
        <span className="mr-[2px] ml-auto -translate-y-[4px]">31 fps</span>
      </footer>
    </div>
  );
}
